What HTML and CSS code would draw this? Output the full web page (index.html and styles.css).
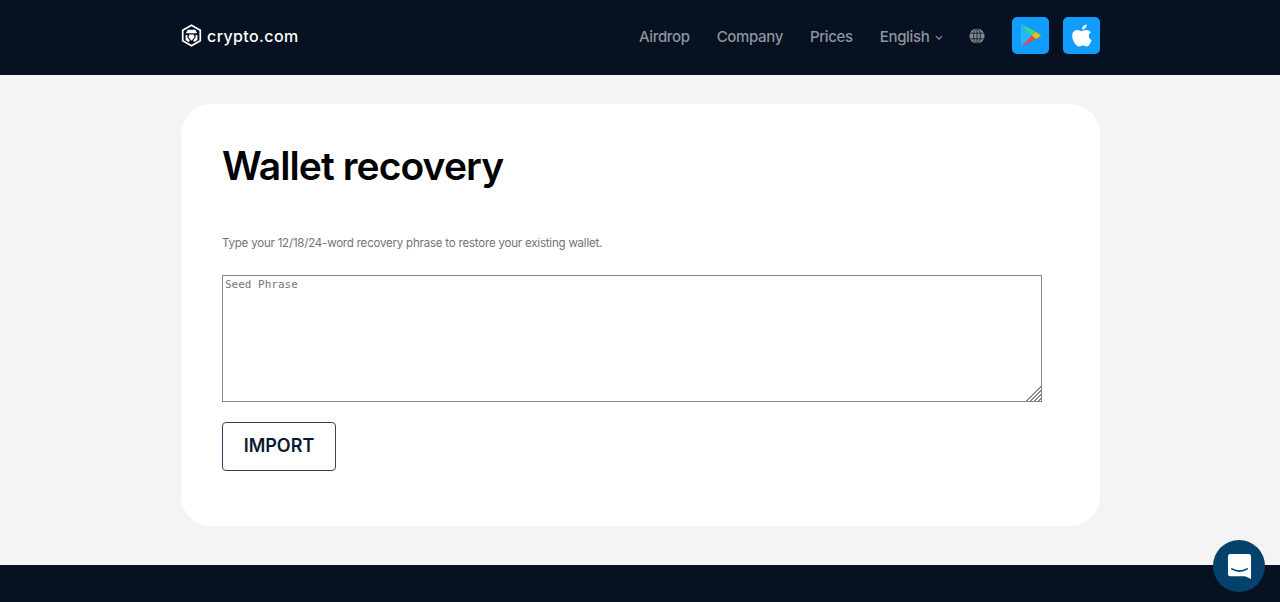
FILE: index.html
```html
<!DOCTYPE html>
<html>
<head>
    <link rel="stylesheet" href="styles.css">
</head>
<body>
    <header class="site-header">
        <div class="header-inner">
            <a class="logo" href="#">
                <svg class="logo-mark" viewBox="0 0 22 24" width="21" height="23">
                    <path d="M11 1.200 20.200 6.500V17.500L11 22.800 1.800 17.500V6.500Z" fill="none" stroke="#fff" stroke-width="1.800"/>
                    <path d="M7 6H15L16.800 9.600H5.200Z" fill="#fff"/>
                    <path d="M8.600 11H13.400L14.200 13.800 11 17.400 7.800 13.800Z" fill="#fff"/>
                    <path d="M4.800 11.400 6.600 11.400 6.800 14.200 9.400 17.600 7.800 18.800 4.800 16.800Z" fill="#fff"/>
                    <path d="M17.200 11.400 15.400 11.400 15.200 14.200 12.600 17.600 14.200 18.800 17.200 16.800Z" fill="#fff"/>
                </svg>
                <span class="logo-text">crypto.com</span>
            </a>
            <nav class="main-nav">
                <a class="nav-link" href="#">Airdrop</a>
                <a class="nav-link" href="#">Company</a>
                <a class="nav-link" href="#">Prices</a>
                <a class="nav-link lang-link" href="#">English
                    <svg class="chevron" viewBox="0 0 8 6" width="8" height="6">
                        <path d="M1 1.200 4 4.200 7 1.200" fill="none" stroke="#8f949b" stroke-width="1.200"/>
                    </svg>
                </a>
                <svg class="globe" viewBox="0 0 16 16" width="16" height="16">
                    <circle cx="8" cy="8" r="7.600" fill="#85888d"/>
                    <g fill="none" stroke="#0a1424" stroke-width="0.800">
                        <ellipse cx="8" cy="8" rx="3.400" ry="7.600"/>
                        <path d="M8 .4V15.600M1.200 5.200H14.800M1.200 10.800H14.800"/>
                    </g>
                </svg>
                <div class="store-buttons">
                    <a class="store-btn" href="#">
                        <svg viewBox="0 0 20 23" width="20" height="23">
                            <path d="M0 0 11 11.500 0 23Z" fill="#29b6f6"/>
                            <path d="M0 0 15 8 11 11.500Z" fill="#3ddc84"/>
                            <path d="M0 23 15 15 11 11.500Z" fill="#ea4359"/>
                            <path d="M15 8 20 11.500 15 15 11 11.500Z" fill="#fbbc04"/>
                        </svg>
                    </a>
                    <a class="store-btn" href="#">
                        <svg viewBox="0 0 20 23" width="20" height="23">
                            <path d="M14.400 6c2 0 3.500 1 4.400 2.400-3 1.900-2.500 6.100.9 7.500-.9 2.500-2.800 6.600-5.100 6.600-1.300 0-1.900-.9-3.700-.9-1.800 0-2.400.9-3.700.9C4 22.500.2 16.800.2 11.800.2 8 2.800 6 5.300 6c1.700 0 3 1.100 4.200 1.100C10.600 7.100 12 6 14.400 6Z" fill="#fff"/>
                            <path d="M14.600.4c.2 1.500-.4 2.800-1.200 3.700-.9 1-2 1.600-3.300 1.500-.2-1.400.4-2.700 1.200-3.600C12.100 1.100 13.400.5 14.600.4Z" fill="#fff"/>
                        </svg>
                    </a>
                </div>
            </nav>
        </div>
    </header>

    <main class="page-main">
        <section class="recovery-card">
            <h1 class="card-title">Wallet recovery</h1>
            <p class="card-text">Type your 12/18/24-word recovery phrase to restore your existing wallet.</p>
            <textarea class="seed-input" placeholder="Seed Phrase"></textarea>
            <button class="import-button">IMPORT</button>
        </section>
    </main>

    <footer class="site-footer"></footer>

    <!-- chat launcher -->
    <button class="chat-launcher">
        <svg viewBox="0 0 26 28" width="25" height="27">
            <path d="M3.500 1H22.500Q25 1 25 3.500V27L18.800 24.200H3.500Q1 24.200 1 21.700V3.500Q1 1 3.500 1Z" fill="#fff"/>
            <path d="M5 16.500Q13 21 21 16.500" fill="none" stroke="#04426b" stroke-width="1.700" stroke-linecap="round"/>
        </svg>
    </button>
</body>
</html>
```

FILE: styles.css
```css
html, body {
    margin: 0;
    height: 602px;
    overflow: hidden;
}
body {
    font-family: Inter, "Liberation Sans", sans-serif;
    background: #f4f4f4;
}
a {
    text-decoration: none;
}
.site-header {
    height: 75px;
    background: #061121;
}
.header-inner {
    width: 919px;
    height: 100%;
    margin-left: 181px;
    padding-bottom: 4px;
    box-sizing: border-box;
    display: flex;
    align-items: center;
    justify-content: space-between;
}
.logo {
    display: flex;
    align-items: center;
    gap: 5px;
}
.logo-text {
    color: #fff;
    font-size: 16px;
    font-weight: 500;
    letter-spacing: 0.4px;
}
.main-nav {
    display: flex;
    align-items: center;
}
.nav-link {
    color: #8f949b;
    font-size: 15px;
    font-weight: 500;
    letter-spacing: -0.35px;
    margin-top: 2px;
    margin-right: 27px;
}
.lang-link {
    margin-right: 26px;
}
.chevron {
    margin-left: 2px;
    vertical-align: 1px;
}
.globe {
    margin-right: 27px;
    margin-top: 1px;
}
.store-buttons {
    display: flex;
    gap: 14px;
}
.store-btn {
    width: 37px;
    height: 37px;
    border-radius: 5px;
    background: #119cff;
    display: flex;
    align-items: center;
    justify-content: center;
}
.page-main {
    height: 490px;
    padding-top: 29px;
    box-sizing: border-box;
}
.recovery-card {
    width: 919px;
    height: 422px;
    box-sizing: border-box;
    margin-left: 181px;
    padding: 38px 41px 0;
    background: #fff;
    border-radius: 30px;
}
.card-title {
    margin: 0;
    color: #000;
    font-size: 39px;
    line-height: 48px;
    font-weight: 600;
    letter-spacing: -0.9px;
}
.card-text {
    margin: 45px 0 0;
    color: #6f7278;
    font-size: 11.5px;
    line-height: 16px;
    letter-spacing: -0.2px;
}
.seed-input {
    display: block;
    width: 820px;
    height: 127px;
    margin-top: 24px;
    padding: 2px;
    box-sizing: border-box;
    border: 1px solid #85858f;
    border-radius: 0;
    font-family: "DejaVu Sans Mono", monospace;
    font-size: 11px;
    outline: none;
}
.seed-input::-webkit-resizer {
    background: linear-gradient(135deg, #fff 50%, transparent 50%), repeating-linear-gradient(135deg, #fff 0 1px, #8a8a8a 1px 2.4px, #fff 2.4px 3px);
}
.import-button {
    display: block;
    width: 114px;
    height: 49px;
    margin-top: 20px;
    padding: 0 0 2px;
    background: #fff;
    border: 1px solid #33435f;
    border-radius: 4px;
    color: #0b1a33;
    font-family: Inter, "Liberation Sans", sans-serif;
    font-size: 18px;
    font-weight: 600;
}
.site-footer {
    height: 37px;
    background: #061121;
}
.chat-launcher {
    position: fixed;
    right: 15px;
    bottom: 10px;
    width: 52px;
    height: 52px;
    padding: 0;
    border: none;
    border-radius: 50%;
    background: #04426b;
    display: flex;
    align-items: center;
    justify-content: center;
}
```
